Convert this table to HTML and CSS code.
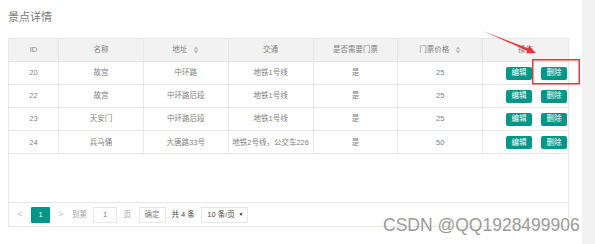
FILE: index.html
```html
<!DOCTYPE html>
<html lang="zh">
<head>
<meta charset="utf-8">
<title>景点详情</title>
<link rel="stylesheet" href="styles.css">
</head>
<body>
<div class="page">
  <div class="main">
    <div class="title">景点详情</div>
    <div class="table">
      <div class="row head">
        <div class="cell">ID</div>
        <div class="cell">名称</div>
        <div class="cell">地址<svg class="sort" viewBox="0 0 6 8" width="6" height="8"><path d="M0.5 3.4 L3 0.6 L5.5 3.4 Z M0.5 4.6 L5.5 4.6 L3 7.4 Z"/></svg></div>
        <div class="cell">交通</div>
        <div class="cell">是否需要门票</div>
        <div class="cell">门票价格<svg class="sort" viewBox="0 0 6 8" width="6" height="8"><path d="M0.5 3.4 L3 0.6 L5.5 3.4 Z M0.5 4.6 L5.5 4.6 L3 7.4 Z"/></svg></div>
        <div class="cell">操作</div>
      </div>
      <div class="row">
        <div class="cell">20</div>
        <div class="cell">故宫</div>
        <div class="cell">中环路</div>
        <div class="cell">地铁1号线</div>
        <div class="cell">是</div>
        <div class="cell">25</div>
        <div class="cell ops"><span class="btn">编辑</span><span class="btn">删除</span></div>
      </div>
      <div class="row">
        <div class="cell">22</div>
        <div class="cell">故宫</div>
        <div class="cell">中环路后段</div>
        <div class="cell">地铁1号线</div>
        <div class="cell">是</div>
        <div class="cell">25</div>
        <div class="cell ops"><span class="btn">编辑</span><span class="btn">删除</span></div>
      </div>
      <div class="row">
        <div class="cell">23</div>
        <div class="cell">天安门</div>
        <div class="cell">中环路后段</div>
        <div class="cell">地铁1号线</div>
        <div class="cell">是</div>
        <div class="cell">25</div>
        <div class="cell ops"><span class="btn">编辑</span><span class="btn">删除</span></div>
      </div>
      <div class="row">
        <div class="cell">24</div>
        <div class="cell">兵马俑</div>
        <div class="cell">大唐路33号</div>
        <div class="cell nowrap">地铁2号线，公交车226</div>
        <div class="cell">是</div>
        <div class="cell">50</div>
        <div class="cell ops"><span class="btn">编辑</span><span class="btn">删除</span></div>
      </div>
      <div class="blank"></div>
      <div class="pager">
        <span class="arrow prev">&lt;</span>
        <span class="cur">1</span>
        <span class="arrow next">&gt;</span>
        <span class="lbl goto">到第</span>
        <span class="inp">1</span>
        <span class="lbl pg">页</span>
        <span class="ok">确定</span>
        <span class="total">共 4 条</span>
        <span class="sel">10 条/页<span class="caret">▼</span></span>
      </div>
    </div>
  </div>
  <div class="scrollbar"></div>
</div>
<svg class="overlay" width="595" height="244" viewBox="0 0 595 244">
  <polygon class="arrowshape" points="483,31 528.2,48.5 529.2,45.9 536,53 526.2,53.3 527.2,50.7"/>
  <rect class="mark" x="532.75" y="59.75" width="46.5" height="24"/>
</svg>
<div class="watermark">CSDN @QQ1928499906</div>
</body>
</html>
```

FILE: styles.css
```css
* { box-sizing: border-box; }
html, body { margin: 0; padding: 0; }
body {
  background: #fff;
  font-family: "Liberation Sans", "Noto Sans CJK SC", sans-serif;
  color: #808080;
  width: 595px;
  height: 244px;
  overflow: hidden;
  position: relative;
}
.page {
  display: flex;
  height: 244px;
}
.main {
  width: 582px;
  padding: 8px 0 0 8px;
}
.scrollbar {
  flex: 1;
  background: #f2f2f2;
}
.title {
  font-size: 11px;
  line-height: 16px;
  color: #7a7a7a;
  font-family: "Noto Sans CJK SC", sans-serif;
}
.table {
  margin-top: 14px;
  width: 561px;
  border: 1px solid #e6e6e6;
  font-size: 7.5px;
}
.row {
  display: grid;
  grid-template-columns: 50px repeat(6, 1fr);
  height: 23.1px;
  border-bottom: 1px solid #e6e6e6;
}
.row.head {
  height: 23px;
  background: #f2f2f2;
}
.cell {
  display: flex;
  align-items: center;
  justify-content: center;
  border-right: 1px solid #e6e6e6;
  white-space: nowrap;
  line-height: 1;
}
.cell:last-child { border-right: none; }
.sort {
  margin-left: 6px;
  fill: #bcbcbc;
}
.ops {
  justify-content: flex-end;
  gap: 9px;
  padding-right: 1px;
}
.btn {
  display: inline-flex;
  align-items: center;
  justify-content: center;
  width: 26px;
  height: 13px;
  background: #009688;
  color: #fff;
  border-radius: 2px;
  font-size: 7.5px;
}
.blank { height: 48px; }
.pager {
  display: flex;
  align-items: center;
  height: 24px;
  border-top: 1px solid #e6e6e6;
  font-size: 7.5px;
  line-height: 1;
}
.arrow {
  width: 8px;
  text-align: center;
  color: #c2c2c2;
  font-size: 9px;
}
.prev { margin-left: 7px; }
.cur {
  margin-left: 7px;
  width: 19px;
  height: 16px;
  background: #009688;
  color: #fff;
  display: flex;
  align-items: center;
  justify-content: center;
  border-radius: 1px;
}
.next { margin-left: 7px; }
.lbl { color: #a0a0a0; }
.goto { margin-left: 7px; }
.inp {
  margin-left: 6px;
  width: 24px;
  height: 16px;
  border: 1px solid #e6e6e6;
  display: flex;
  align-items: center;
  justify-content: center;
  color: #808080;
}
.pg { margin-left: 6.5px; }
.ok {
  margin-left: 7.5px;
  width: 27px;
  height: 16px;
  border: 1px solid #e6e6e6;
  display: flex;
  align-items: center;
  justify-content: center;
  color: #808080;
}
.total {
  margin-left: 6px;
  color: #444;
}
.sel {
  margin-left: 6.5px;
  width: 47px;
  height: 16px;
  border: 1px solid #e6e6e6;
  display: flex;
  align-items: center;
  padding-left: 5px;
  color: #444;
  position: relative;
}
.caret {
  margin-left: auto;
  margin-right: 4px;
  font-size: 5px;
  color: #333;
}
.overlay {
  position: absolute;
  left: 0;
  top: 0;
  pointer-events: none;
}
.arrowshape { fill: #e8343a; }
.mark {
  fill: none;
  stroke: #e8343a;
  stroke-width: 1.5;
}
.watermark {
  position: absolute;
  left: 383px;
  top: 216.5px;
  font-size: 17.5px;
  line-height: 1;
  color: #9a9a9a;
  font-family: "Liberation Sans", sans-serif;
  white-space: nowrap;
}
```
